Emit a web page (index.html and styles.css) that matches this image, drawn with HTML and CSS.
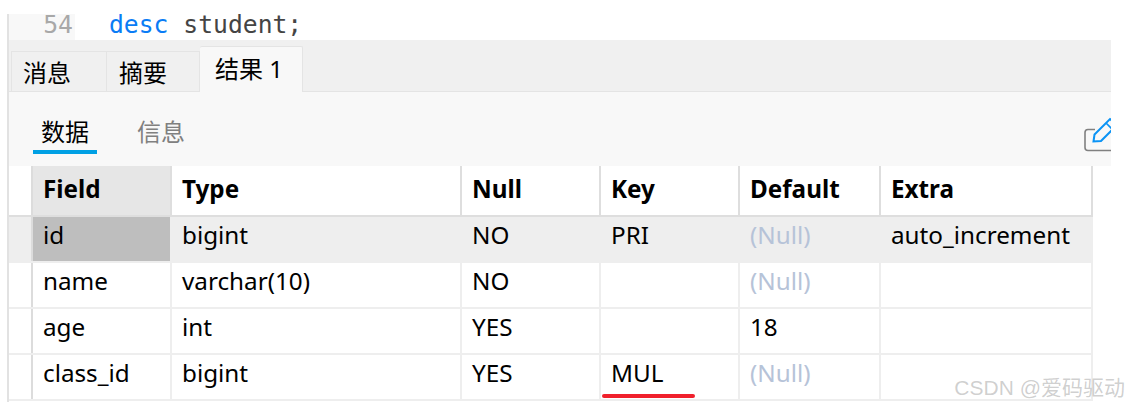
FILE: index.html
```html
<!DOCTYPE html>
<html lang="en">
<head>
    <meta charset="UTF-8">
    <title>desc student</title>
    <link rel="stylesheet" href="styles.css">
</head>
<body>
    <div class="window">
        <div class="editor">
            <span class="line-no">54</span>
            <code class="sql"><span class="kw">desc</span> student;</code>
        </div>
        <div class="tabs">
            <div class="tab">消息</div>
            <div class="tab">摘要</div>
            <div class="tab active">结果 1</div>
        </div>
        <div class="subbar">
            <div class="subtabs">
                <div class="subtab active">数据</div>
                <div class="subtab">信息</div>
            </div>
            <svg class="edit-icon" width="30" height="40" viewBox="0 0 30 40" fill="none">
                <path d="M11 15.5H4a3 3 0 0 0-3 3v15a3 3 0 0 0 3 3h23" stroke="#808080" stroke-width="1.6"/>
                <path d="M9.5 27.5l1-7L26 5l7 6-16 16z" stroke="#0a93f5" stroke-width="2"/>
                <path d="M22 9l6 6" stroke="#0a93f5" stroke-width="1.6"/>
            </svg>
        </div>
        <div class="grid">
            <div class="row head">
                <div class="mark"></div>
                <div class="cell first">Field</div>
                <div class="cell">Type</div>
                <div class="cell">Null</div>
                <div class="cell">Key</div>
                <div class="cell">Default</div>
                <div class="cell">Extra</div>
            </div>
            <div class="row selected">
                <div class="mark"></div>
                <div class="cell first">id</div>
                <div class="cell">bigint</div>
                <div class="cell">NO</div>
                <div class="cell">PRI</div>
                <div class="cell null">(Null)</div>
                <div class="cell">auto_increment</div>
            </div>
            <div class="row">
                <div class="mark"></div>
                <div class="cell first">name</div>
                <div class="cell">varchar(10)</div>
                <div class="cell">NO</div>
                <div class="cell"></div>
                <div class="cell null">(Null)</div>
                <div class="cell"></div>
            </div>
            <div class="row">
                <div class="mark"></div>
                <div class="cell first">age</div>
                <div class="cell">int</div>
                <div class="cell">YES</div>
                <div class="cell"></div>
                <div class="cell">18</div>
                <div class="cell"></div>
            </div>
            <div class="row">
                <div class="mark"></div>
                <div class="cell first">class_id</div>
                <div class="cell">bigint</div>
                <div class="cell">YES</div>
                <div class="cell underlined">MUL</div>
                <div class="cell null">(Null)</div>
                <div class="cell"></div>
            </div>
        </div>
        <div class="watermark">CSDN @爱码驱动</div>
    </div>
</body>
</html>
```

FILE: styles.css
```css
body {
    margin: 0;
    background-color: #fff;
    font-family: "Noto Sans", "Noto Sans CJK SC", sans-serif;
    color: #000;
    overflow: hidden;
}
.window {
    position: relative;
    width: 1102px;
    height: 388px;
    margin: 14px 0 0 7px;
    border-left: 2px solid #e2e2e2;
}

/* editor line */
.editor {
    display: flex;
    height: 26px;
}
.line-no {
    width: 66px;
    padding-right: 2px;
    box-sizing: border-box;
    background-color: #f8f8f8;
    font: 24.8px/22px "DejaVu Sans Mono", monospace;
    color: #a8a8a8;
    text-align: right;
}
.sql {
    margin-left: 34px;
    font: 24.7px/22px "DejaVu Sans Mono", monospace;
    color: #444;
}
.kw {
    color: #0a7cf5;
}

/* result tabs */
.tabs {
    display: flex;
    align-items: flex-end;
    height: 51px;
    padding-left: 2px;
    background-color: #f0f0f0;
    border-bottom: 1px solid #e4e4e4;
}
.tab {
    width: 96px;
    height: 40px;
    padding-left: 11px;
    box-sizing: border-box;
    border: 1px solid #e4e4e4;
    border-bottom: none;
    font-size: 24px;
    line-height: 42px;
}
.tab + .tab {
    border-left: none;
    width: 93px;
    padding-left: 12px;
}
.tab.active {
    position: relative;
    top: 1px;
    width: 103px;
    height: 46px;
    padding-left: 15px;
    background-color: #f8f8f8;
    line-height: 44px;
    border-radius: 2px 2px 0 0;
}

/* data / info switch */
.subbar {
    display: flex;
    justify-content: space-between;
    height: 74px;
    padding-left: 24px;
    background-color: #f8f8f8;
    overflow: hidden;
}
.subtabs {
    display: flex;
    gap: 32px;
}
.subtab {
    width: 64px;
    height: 58px;
    padding-top: 20px;
    box-sizing: border-box;
    font-size: 24px;
    line-height: 40px;
    text-align: center;
    color: #808080;
}
.subtab.active {
    height: 62px;
    color: #000;
    border-bottom: 4px solid #00a0e4;
}
.edit-icon {
    flex: none;
    margin: 22px -3px 0 0;
}

/* result grid */
.grid {
    width: 1084px;
    font-size: 24.25px;
}
.row {
    display: grid;
    grid-template-columns: 24px 139px 290px 139px 139px 141px 212px;
    height: 44px;
    border-bottom: 2px solid #eee;
}
.mark {
    border-right: 2px solid #dcdcdc;
}
.cell {
    padding-left: 10px;
    box-sizing: border-box;
    line-height: 36px;
    border-right: 2px solid #eee;
    white-space: nowrap;
}
.head {
    height: 49px;
    border-bottom-color: #dedede;
    font-weight: bold;
}
.head .cell {
    line-height: 45px;
    border-right-color: #dedede;
}
.head .first {
    background-color: #e6e6e6;
}
.selected {
    background-color: #eee;
}
.selected .first {
    background-color: #bebebe;
}
.null {
    color: #b6c3d8;
}
.underlined {
    position: relative;
}
.underlined::after {
    content: "";
    position: absolute;
    left: 1px;
    bottom: 1px;
    width: 93px;
    height: 4px;
    border-radius: 2px;
    background-color: #f0202c;
}
.watermark {
    position: absolute;
    right: -14px;
    bottom: 2px;
    font-family: "Liberation Sans", "Noto Sans CJK SC", sans-serif;
    font-size: 21px;
    line-height: 24px;
    color: rgba(120, 120, 120, 0.36);
}
```
